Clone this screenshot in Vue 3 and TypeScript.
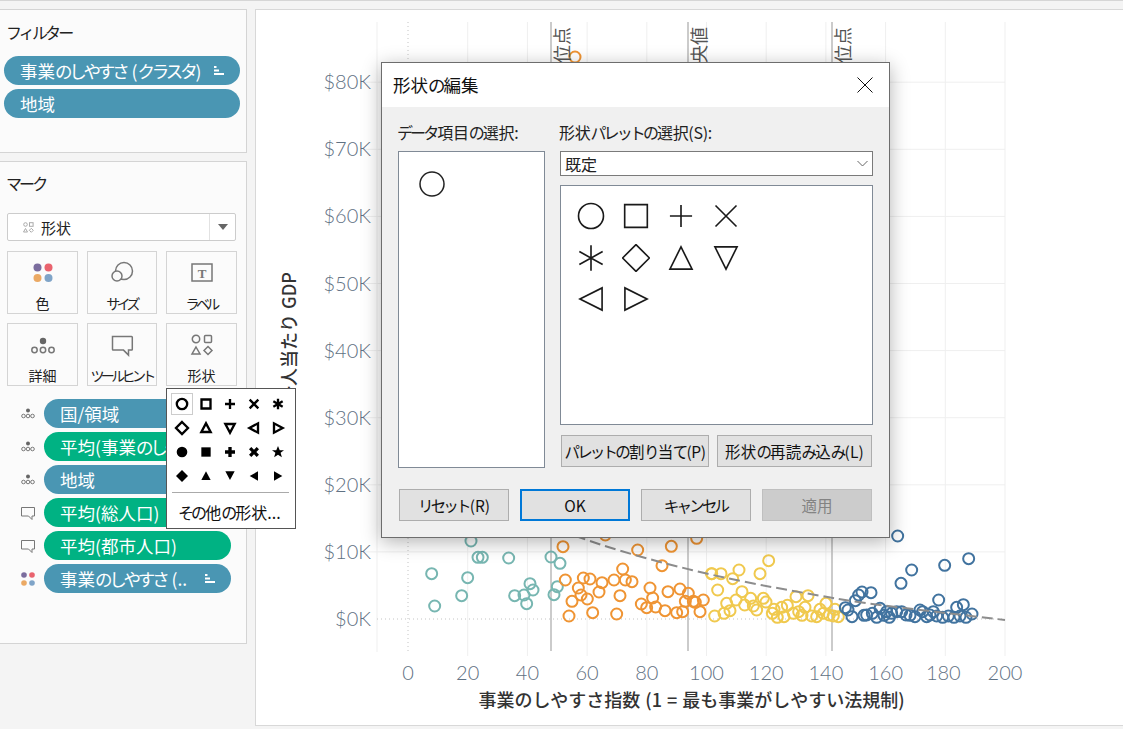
<script setup lang="ts">
import { h } from 'vue'

type P = [number, number]
const z5 = (a: P[]): P[] => a.map(([x, y]) => [400 + x / 3, 530 + y / 3])
const z6 = (a: P[]): P[] => a.map(([x, y]) => [700 + x / 3, 530 + y / 3])

// Renders a string, tagging kana runs so they can be set narrower than kanji.
const T = (props: { t: string }) =>
  props.t
    .split(/([ぁ-んァ-ヶー]+)/)
    .filter((s) => s)
    .map((s) => (/^[ぁ-んァ-ヶー]/.test(s) ? h('span', { class: 'kana' }, s) : s))
T.props = ['t']

const teal = z5([[213,33],[95,131],[203,143],[234,82],[247,82],[326,84],[453,81],[480,100],[185,197],[104,228],[344,197],[372,195],[390,161],[399,180],[380,221],[462,194],[472,170]])
const orange: P[] = [[575,57], ...z5([[489,50],[616,15],[713,60],[814,49],[890,25],[786,107],[668,117],[496,150],[550,144],[570,147],[606,158],[642,150],[676,150],[696,155],[535,174],[543,195],[562,207],[597,186],[660,197],[516,214],[750,174],[804,185],[840,177],[865,190],[758,204],[724,222],[740,233],[767,231],[795,242],[830,248],[848,245],[856,214],[880,214],[886,217],[910,210],[900,245],[507,258],[578,248],[650,252]])]
const yellow = [...z5([[935,131]]), ...z6([[35,131],[63,131],[98,146],[117,120],[180,131],[206,92],[53,180],[126,185],[108,210],[80,220],[44,258],[72,250],[90,242],[134,225],[152,205],[160,228],[170,240],[190,205],[198,216],[217,250],[232,262],[222,238],[245,232],[262,226],[252,260],[288,200],[324,197],[280,250],[296,245],[306,256],[315,232],[335,258],[350,260],[360,238],[378,220],[370,250],[388,255],[405,238],[415,260],[400,258]])]
const blue = z6([[593,18],[603,160],[635,120],[734,106],[806,86],[716,210],[513,188],[486,186],[476,195],[466,212],[436,233],[444,240],[456,260],[492,256],[500,255],[517,250],[530,262],[540,235],[552,256],[568,262],[560,245],[575,250],[590,245],[605,245],[618,255],[630,256],[645,260],[660,240],[668,245],[680,260],[690,255],[700,245],[710,258],[728,262],[745,258],[762,262],[770,232],[790,224],[780,258],[798,262],[816,252]])

const groups = [
  { color: '#77b6b1', pts: teal },
  { color: '#ef9433', pts: orange },
  { color: '#f0c94e', pts: yellow },
  { color: '#41739f', pts: blue },
]

const yTicks = [0, 10, 20, 30, 40, 50, 60, 70, 80].map((k) => ({ k, y: 619 - k * 6.71 }))
const xTicks = [0, 20, 40, 60, 80, 100, 120, 140, 160, 180, 200].map((v) => ({ v, x: 408 + v * 2.985 }))
const refs = [
  { x: 551, label: '下位四分位点' },
  { x: 688, label: '中央値' },
  { x: 832, label: '上位四分位点' },
]

const markButtons = [
  { label: '色', icon: 'color' },
  { label: 'サイズ', icon: 'size' },
  { label: 'ラベル', icon: 'text' },
  { label: '詳細', icon: 'detail' },
  { label: 'ツールヒント', icon: 'tip' },
  { label: '形状', icon: 'shape' },
]

const shelf = [
  { text: '国/領域', tone: 'blue', icon: 'detail' },
  { text: '平均(事業のしやすさ指数)', tone: 'green', icon: 'detail' },
  { text: '地域', tone: 'blue', icon: 'detail' },
  { text: '平均(総人口)', tone: 'green', icon: 'tip' },
  { text: '平均(都市人口)', tone: 'green', icon: 'tip' },
  { text: '事業のしやすさ (..', tone: 'blue', icon: 'color', sort: true },
]

const bigGlyphs: Record<string, string> = {
  circle: 'M12 1.300a10.700 10.700 0 1 0 0 21.400a10.700 10.700 0 1 0 0-21.400z',
  square: 'M2.300 2.300h19.400v19.400H2.300z',
  plus: 'M12 2.500v19M2.500 12h19',
  cross: 'M3 3l18 18M21 3L3 21',
  star: 'M12 1v22M2 6.500l20 11M22 6.500l-20 11',
  diamond: 'M12 .5L23.500 12L12 23.500L.5 12z',
  up: 'M12 2.500L21.500 21.500H2.500z',
  down: 'M12 21.500L2.500 2.500h19z',
  left: 'M2.500 12L21.500 2.500v19z',
  right: 'M21.500 12L2.500 2.500v19z',
}
const bigPalette = Object.keys(bigGlyphs)

const popOutline = [
  'M12 4.200a7.800 7.800 0 1 0 0 15.600a7.800 7.800 0 1 0 0-15.600z',
  'M5.250 5.250h13.500v13.500H5.250z',
  'M12 4.500v15M4.500 12h15',
  'M5.500 5.500l13 13M18.500 5.500l-13 13',
  'M12 4v16M5 8l14 8M19 8L5 16',
  'M12 3L21 12L12 21L3 12z',
  'M12 5L19 18H5z',
  'M12 19L5 6h14z',
  'M5 12L18 5v14z',
  'M19 12L6 5v14z',
]
const popSolid = [
  'M12 4a8 8 0 1 0 0 16a8 8 0 1 0 0-16z',
  'M5 5h14v14H5z',
  'M9.500 4.500h5v5h5v5h-5v5h-5v-5h-5v-5h5z',
  'M8 4.500l4 4l4-4l3.500 3.500l-4 4l4 4l-3.500 3.500l-4-4l-4 4l-3.500-3.500l4-4l-4-4z',
  'M12 3l2.600 6.200h6.400l-5.100 4.100l1.900 6.700L12 16.200l-5.800 3.800l1.900-6.700L3 9.200h6.400z',
  'M12 3L21 12L12 21L3 12z',
  'M12 5L19 18H5z',
  'M12 18L5 5h14z',
  'M5.500 12L18 5v14z',
  'M18.500 12L6 5v14z',
]
</script>

<template>
  <div class="page">
    <aside class="side">
      <section class="panel filters">
        <h2 class="panel-title"><T t="フィルター" /></h2>
        <div class="pill pill-blue filter-pill">
          <span class="pill-text"><T t="事業のしやすさ (クラスタ)" /></span>
          <svg class="sort" width="10" height="9" viewBox="0 0 10 9"><path d="M0 0h2.500v2H0zM0 3.500h5v2H0zM0 7h10v2H0z" fill="#fff" /></svg>
        </div>
        <div class="pill pill-blue filter-pill"><span class="pill-text">地域</span></div>
      </section>

      <section class="panel marks">
        <h2 class="panel-title"><T t="マーク" /></h2>
        <div class="dropdown">
          <svg width="11" height="11" viewBox="0 0 11 11" class="dd-icon" fill="none" stroke="#aaa"><circle cx="2.500" cy="2.500" r="1.800" /><rect x="6.500" y="0.700" width="3.600" height="3.600" /><path d="M2.500 6.500l2 3.500h-4z" /><path d="M8.300 6.300l2 2l-2 2l-2-2z" /></svg>
          <span class="dd-text">形状</span>
          <span class="dd-caret"><i></i></span>
        </div>
        <div class="mark-grid">
          <div v-for="b in markButtons" :key="b.label" class="mark-btn">
            <svg class="mark-icon" width="30" height="30" viewBox="0 0 30 30" fill="none" stroke="#777" stroke-width="1.500">
              <template v-if="b.icon === 'color'">
                <circle cx="9.500" cy="9.500" r="4" fill="#7b6d9e" stroke="none" />
                <circle cx="20.500" cy="9.500" r="4" fill="#e9636e" stroke="none" />
                <circle cx="9.500" cy="20" r="4" fill="#eba964" stroke="none" />
                <circle cx="20.500" cy="20" r="4" fill="#7fa4c8" stroke="none" />
              </template>
              <template v-else-if="b.icon === 'size'">
                <circle cx="17" cy="13" r="8.500" />
                <circle cx="10" cy="18" r="5" fill="#fafafa" />
              </template>
              <template v-else-if="b.icon === 'text'">
                <rect x="5" y="6" width="20" height="17" />
                <text x="15" y="19.500" text-anchor="middle" class="t-glyph">T</text>
              </template>
              <template v-else-if="b.icon === 'detail'">
                <circle cx="15" cy="11" r="3.200" fill="#666" stroke="none" />
                <circle cx="6.500" cy="20" r="2.700" />
                <circle cx="15" cy="20" r="2.700" />
                <circle cx="23.500" cy="20" r="2.700" />
              </template>
              <template v-else-if="b.icon === 'tip'">
                <path d="M5.500 6.500h19a.8.8 0 0 1 .8.8v12a.8.8 0 0 1-.8.800h-3v5l-5-5H6.300a.8.8 0 0 1-.8-.8v-12z" />
              </template>
              <template v-else>
                <circle cx="9" cy="9" r="3.700" />
                <rect x="17.500" y="5.500" width="7" height="7" rx="1" />
                <path d="M9 17l4 7H5z" />
                <path d="M21 16.500l4 4l-4 4l-4-4z" />
              </template>
            </svg>
            <span class="mark-label"><T :t="b.label" /></span>
          </div>
        </div>
        <ul class="shelf">
          <li v-for="s in shelf" :key="s.text" class="shelf-row">
            <svg class="shelf-icon" width="16" height="16" viewBox="0 0 16 16" fill="none" stroke="#777" stroke-width="1">
              <template v-if="s.icon === 'detail'">
                <circle cx="8" cy="4.500" r="2" fill="#666" stroke="none" />
                <circle cx="3.500" cy="10" r="1.800" />
                <circle cx="8" cy="10" r="1.800" />
                <circle cx="12.500" cy="10" r="1.800" />
              </template>
              <template v-else-if="s.icon === 'tip'">
                <path d="M1.500 2.500h13v8.500h-2.500v3.500l-3.500-3.500h-7z" />
              </template>
              <template v-else>
                <circle cx="4" cy="4" r="2.800" fill="#7b6d9e" stroke="none" />
                <circle cx="12" cy="4" r="2.800" fill="#e9636e" stroke="none" />
                <circle cx="4" cy="12" r="2.800" fill="#eba964" stroke="none" />
                <circle cx="12" cy="12" r="2.800" fill="#7fa4c8" stroke="none" />
              </template>
            </svg>
            <div class="pill shelf-pill" :class="s.tone === 'blue' ? 'pill-blue' : 'pill-green'">
              <span class="pill-text"><T :t="s.text" /></span>
              <svg v-if="s.sort" class="sort" width="10" height="9" viewBox="0 0 10 9"><path d="M0 0h2.500v2H0zM0 3.500h5v2H0zM0 7h10v2H0z" fill="#fff" /></svg>
            </div>
          </li>
        </ul>
      </section>
    </aside>

    <main class="chart-panel">
      <svg class="chart" width="868" height="717" viewBox="255 9 868 717">
        <g stroke="#efefef" stroke-width="1">
          <line v-for="t in yTicks.filter((t) => t.k > 0)" :key="t.k" x1="364" x2="1005" :y1="t.y" :y2="t.y" />
          <line v-for="t in xTicks.filter((t) => t.v > 0)" :key="t.v" :x1="t.x" :x2="t.x" y1="22" y2="656" />
          <line x1="377" x2="377" y1="22" y2="652" />
        </g>
        <g stroke="#c4c4c4" stroke-width="1" stroke-dasharray="1 3">
          <line x1="377" x2="1005" y1="619" y2="619" />
          <line x1="408" x2="408" y1="22" y2="652" />
        </g>
        <line v-for="r in refs" :key="r.x" :x1="r.x" :x2="r.x" y1="22" y2="651" stroke="#cbcbcb" stroke-width="2" />
        <g v-for="g in groups" :key="g.color" fill="none" :stroke="g.color" stroke-width="2">
          <circle v-for="(p, i) in g.pts" :key="i" :cx="p[0]" :cy="p[1]" r="5.500" />
        </g>
        <text v-for="r in refs" :key="r.label" class="ref-label" :transform="`translate(${r.x + 18} 27) rotate(-90)`" text-anchor="end">{{ r.label }}</text>
        <path d="M560 530C600 546 650 560 700 572S800 592 833 598S930 611 1005 620" fill="none" stroke="#8d8d8d" stroke-width="2" stroke-dasharray="11 5" />
        <text v-for="t in yTicks" :key="t.k" class="tick" x="371" :y="t.y + 7" text-anchor="end">${{ t.k }}K</text>
        <text v-for="t in xTicks" :key="t.v" class="tick" :x="t.x - (t.v === 180 ? 2 : 0)" y="680" text-anchor="middle">{{ t.v }}</text>
        <text class="axis-title" x="691.500" y="707" text-anchor="middle">事業のしやすさ指数 (1 = 最も事業がしやすい法規制)</text>
        <text class="axis-title" transform="translate(296 338) rotate(-90)" text-anchor="middle">一人当たり GDP</text>
      </svg>
    </main>

    <div class="popup">
      <div class="pop-grid">
        <div v-for="(d, i) in popOutline" :key="d" class="pop-cell" :class="{ 'pop-sel': i === 0 }">
          <svg width="16" height="16" viewBox="0 0 24 24" fill="none" stroke="#000" stroke-width="3.500"><path :d="d" /></svg>
        </div>
        <div v-for="d in popSolid" :key="d" class="pop-cell">
          <svg width="16" height="16" viewBox="0 0 24 24" fill="#000"><path :d="d" /></svg>
        </div>
      </div>
      <div class="pop-sep"></div>
      <div class="pop-more"><T t="その他の形状..." /></div>
    </div>

    <div class="dialog">
      <header class="dlg-head">
        <span class="dlg-title"><T t="形状の編集" /></span>
        <svg width="16" height="16" viewBox="0 0 16 16" class="dlg-close"><path d="M.5.500l15 15M15.500.500l-15 15" stroke="#111" fill="none" /></svg>
      </header>
      <div class="dlg-body">
        <div class="dlg-cols">
          <div class="col-left">
            <label class="dlg-label"><T t="データ項目の選択:" /></label>
            <div class="listbox">
              <svg width="26" height="26" viewBox="0 0 26 26" class="list-mark"><circle cx="13" cy="13" r="12" fill="none" stroke="#222" stroke-width="1.500" /></svg>
            </div>
          </div>
          <div class="col-right">
            <label class="dlg-label"><T t="形状パレットの選択(S):" /></label>
            <div class="select">
              <span>既定</span>
              <svg width="11" height="7" viewBox="0 0 11 7"><path d="M.5 1l5 5l5-5" fill="none" stroke="#666" /></svg>
            </div>
            <div class="palette">
              <svg v-for="g in bigPalette" :key="g" width="28" height="28" viewBox="0 0 24 24" fill="none" stroke="#1a1a1a" stroke-width="1.400"><path :d="bigGlyphs[g]" /></svg>
            </div>
            <div class="pal-actions">
              <button class="btn pal-a"><T t="パレットの割り当て(P)" /></button>
              <button class="btn pal-b"><T t="形状の再読み込み(L)" /></button>
            </div>
          </div>
        </div>
        <div class="dlg-foot">
          <button class="btn foot"><T t="リセット(R)" /></button>
          <button class="btn foot primary">OK</button>
          <button class="btn foot"><T t="キャンセル" /></button>
          <button class="btn foot disabled">適用</button>
        </div>
      </div>
    </div>
  </div>
</template>

<style>
html, body { margin: 0; background: #f4f4f4; }
.kana { letter-spacing: var(--kana, -.18em); margin-right: .06em; }
</style>

<style scoped>
* { box-sizing: border-box; }
.page {
  position: relative;
  width: 1123px;
  height: 729px;
  overflow: hidden;
  display: flex;
  gap: 8px;
  padding-top: 9px;
  background: #f4f4f4;
  border-top: 1px solid #d6d6d6;
  font-family: "Noto Sans CJK JP", "Liberation Sans", sans-serif;
  color: #222;
}
.side {
  width: 247px;
  flex: none;
  display: flex;
  flex-direction: column;
  gap: 8px;
  margin-top: -1px;
}
.panel {
  background: #fbfbfb;
  border: 1px solid #d4d4d4;
  border-left: none;
}
.filters { height: 144px; padding: 10px 6px 0 4px; }
.marks { height: 483px; padding: 9px 9px 0 7px; }
.panel-title { margin: 0 0 12px 2px; font-size: 16px; font-weight: 400; line-height: 24px; height: 24px; }
.marks .panel-title { margin: 0 0 18px -1px; }
.pill {
  height: 29px;
  border-radius: 15px;
  display: flex;
  align-items: center;
  color: #fff;
  font-size: 17.500px;
  padding-left: 16px;
  overflow: hidden;
}
.pill-blue { background: #4a96b3; }
.pill-green { background: #00b283; }
.pill-text { white-space: nowrap; overflow: hidden; flex: 1; line-height: 29px; }
.filter-pill { margin-bottom: 4px; padding-right: 16px; }
.sort { flex: none; }
.dropdown {
  height: 28px;
  width: 229px;
  border: 1px solid #ccc;
  border-radius: 2px;
  background: #fff;
  display: flex;
  align-items: center;
  font-size: 15px;
  padding-left: 15px;
}
.dd-icon { flex: none; }
.dd-text { margin-left: 7px; flex: 1; }
.dd-caret {
  width: 26px;
  height: 100%;
  border-left: 1px solid #e2e2e2;
  display: flex;
  align-items: center;
  justify-content: center;
}
.dd-caret i {
  width: 0;
  height: 0;
  border-left: 5px solid transparent;
  border-right: 5px solid transparent;
  border-top: 6px solid #666;
}
.mark-grid {
  display: grid;
  grid-template-columns: 71px 70px 71px;
  grid-auto-rows: 63px;
  column-gap: 9px;
  row-gap: 9px;
  margin-top: 10px;
}
.mark-btn {
  border: 1px solid #d4d4d4;
  background: #fbfbfb;
  display: flex;
  flex-direction: column;
  align-items: center;
  padding-top: 6px;
}
.mark-icon { flex: none; }
.mark-label { --kana: -.26em; font-size: 14px; line-height: 18px; margin-top: 6px; white-space: nowrap; }
.t-glyph { font-family: "Liberation Serif", serif; font-size: 13px; font-weight: 700; fill: #777; stroke: none; }
.shelf { list-style: none; margin: 13px 0 0; padding: 0 0 0 13px; display: flex; flex-direction: column; gap: 4px; }
.shelf-row { display: flex; align-items: center; gap: 8px; }
.shelf-icon { flex: none; }
.shelf-pill { width: 187px; padding-right: 16px; }
.shelf-pill .sort { margin-left: 4px; }

.chart-panel {
  flex: 1;
  height: 717px;
  background: #fff;
  border: 1px solid #d8d8d8;
  border-right: none;
  margin-top: -1px;
  overflow: hidden;
}
.chart { display: block; margin: -1px 0 0 -1px; }
.tick { font-family: Lato, "Liberation Sans", sans-serif; font-size: 20px; font-weight: 300; fill: #5f7183; }
.ref-label { font-size: 18px; fill: #555; }
.axis-title { font-size: 18px; font-weight: 500; fill: #333; word-spacing: 1px; }

.popup {
  position: absolute;
  left: 166px;
  top: 387px;
  width: 130px;
  height: 141px;
  background: #fff;
  border: 1px solid #555;
  padding: 3px 6px 0 5px;
}
.pop-grid { display: grid; grid-template-columns: repeat(5, 24px); grid-auto-rows: 24px; margin-left: -2px; }
.pop-cell { display: flex; align-items: center; justify-content: center; }
.pop-sel { outline: 1px solid #ccc; outline-offset: -2px; }
.pop-sep { height: 1px; background: #aaa; margin-top: 4px; }
.pop-more { font-size: 16px; line-height: 22px; margin-top: 8px; margin-left: 6px; white-space: nowrap; color: #111; }

.dialog {
  position: absolute;
  left: 381px;
  top: 61px;
  width: 509px;
  height: 476px;
  background: #f0f0f0;
  border: 1px solid #6d6d6d;
  box-shadow: 0 4px 18px rgba(0, 0, 0, .3);
  display: flex;
  flex-direction: column;
}
.dlg-head {
  height: 44px;
  flex: none;
  background: #fff;
  display: flex;
  align-items: center;
  justify-content: space-between;
  padding: 0 16px 2px 11px;
}
.dlg-close { margin-top: 2px; }
.dlg-title { font-size: 17.500px; color: #111; }
.dlg-body { flex: 1; padding: 14px 16px 16px; display: flex; flex-direction: column; justify-content: space-between; }
.dlg-cols { display: flex; gap: 15px; }
.col-left { width: 147px; flex: none; }
.col-right { flex: 1; }
.dlg-label { display: block; font-size: 16px; line-height: 24px; height: 30px; white-space: nowrap; color: #222; margin: -1px 0 1px -1px; letter-spacing: -.3px; }
.listbox { height: 317px; background: #fff; border: 1px solid #808a96; padding: 19px 0 0 20px; }
.list-mark { display: block; }
.select {
  height: 25px;
  background: #fff;
  border: 1px solid #7a7a7a;
  display: flex;
  align-items: center;
  justify-content: space-between;
  font-size: 16px;
  padding: 0 4px;
}
.palette {
  height: 240px;
  margin-top: 9px;
  background: #fff;
  border: 1px solid #808a96;
  display: grid;
  grid-template-columns: repeat(4, 28px);
  grid-auto-rows: 28px;
  column-gap: 17px;
  row-gap: 13.500px;
  padding: 16px 0 0 16px;
}
.pal-actions { display: flex; gap: 8px; margin-top: 10px; padding-left: 1px; }
.btn {
  height: 32px;
  background: #e1e1e1;
  border: 1px solid #adadad;
  font: inherit;
  font-size: 15.500px;
  color: #111;
  padding: 0;
  white-space: nowrap;
}
.pal-a { width: 148px; letter-spacing: -.4px; }
.pal-b { width: 155px; letter-spacing: .2px; }
.dlg-foot { display: flex; gap: 11px; padding-left: 1px; }
.foot { width: 110px; }
.primary { border: 2px solid #0078d7; }
.disabled { background: #cccccc; color: #838383; border-color: #bfbfbf; }
</style>
